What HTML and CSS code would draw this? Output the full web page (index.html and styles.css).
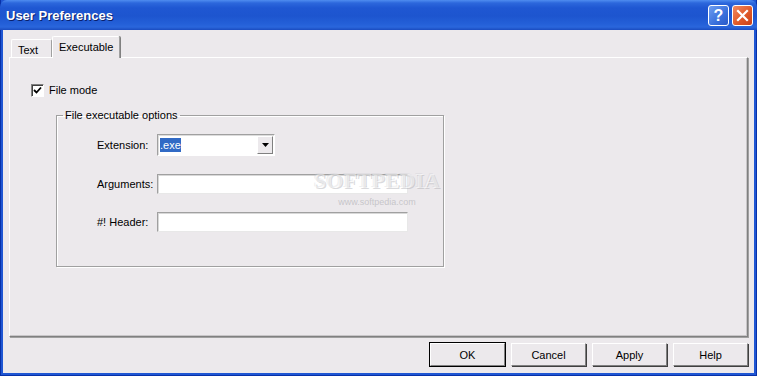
FILE: index.html
```html
<!DOCTYPE html>
<html lang="en">
<head>
    <meta charset="UTF-8">
    <title>User Preferences</title>
    <link rel="stylesheet" href="styles.css">
</head>
<body>
    <div class="window">
        <div class="titlebar">
            <span class="title">User Preferences</span>
            <div class="title-buttons">
                <span class="tbtn help">?</span>
                <span class="tbtn close">
                    <svg width="13" height="13" viewBox="0 0 13 13">
                        <path d="M2 2 L11 11 M11 2 L2 11" stroke="#fff" stroke-width="2.2" stroke-linecap="square"/>
                    </svg>
                </span>
            </div>
        </div>

        <div class="client">
            <div class="tabs">
                <div class="tab">Text</div>
                <div class="tab active">Executable</div>
            </div>

            <div class="panel">
                <label class="check-row">
                    <span class="checkbox">
                        <svg width="9" height="9" viewBox="0 0 9 9">
                            <path d="M1 4 L3.5 6.5 L8 1.5" fill="none" stroke="#000" stroke-width="1.8"/>
                        </svg>
                    </span>
                    File mode
                </label>

                <fieldset class="group">
                    <legend>File executable options</legend>
                    <div class="form-grid">
                        <span class="lbl">Extension:</span>
                        <div class="combo">
                            <span class="combo-value"><span class="sel">.exe</span></span>
                            <span class="combo-btn">
                                <svg width="7" height="4" viewBox="0 0 7 4"><path d="M0 0 H7 L3.5 4 Z" fill="#000"/></svg>
                            </span>
                        </div>

                        <span class="lbl">Arguments:</span>
                        <div class="field"></div>

                        <span class="lbl">#! Header:</span>
                        <div class="field"></div>
                    </div>
                </fieldset>

                <div class="watermark">
                    <span class="wm-big">SOFTPEDIA</span>
                    <span class="wm-small">www.softpedia.com</span>
                </div>
            </div>

            <div class="actions">
                <button class="btn default">OK</button>
                <button class="btn">Cancel</button>
                <button class="btn">Apply</button>
                <button class="btn">Help</button>
            </div>
        </div>
    </div>
</body>
</html>
```

FILE: styles.css
```css
body {
    margin: 0;
    font-family: "Liberation Sans", Arial, sans-serif;
    font-size: 11px;
    color: #000;
}

.window {
    width: 757px;
    height: 376px;
    box-sizing: border-box;
    display: flex;
    flex-direction: column;
    background: #1f56d3;
    border-left: 1px solid #0831a8;
    border-right: 1px solid #0831a8;
    border-bottom: 1px solid #0831a8;
}

.titlebar {
    height: 30px;
    flex-shrink: 0;
    display: flex;
    align-items: center;
    justify-content: space-between;
    padding: 0 4px 0 6px;
    margin: 0 -1px;
    background: linear-gradient(to bottom,
        #4f8df0 0,
        #2c67dc 3px,
        #1f57d2 8px,
        #1d55cf 16px,
        #2460d8 24px,
        #2a66dc 27px,
        #1a4cc0 30px);
    border-radius: 7px 7px 0 0;
}

.title {
    color: #fff;
    font-weight: bold;
    font-size: 13px;
    text-shadow: 1px 1px 0 #0a1f6a;
}

.title-buttons {
    display: flex;
    gap: 3px;
    padding-top: 1px;
}

.tbtn {
    width: 19px;
    height: 19px;
    border: 1px solid #fff;
    border-radius: 3px;
    display: flex;
    align-items: center;
    justify-content: center;
    color: #fff;
}

.help {
    background: linear-gradient(to bottom right, #6e9ef0, #3a70dc 60%, #2a5ac8);
    font-weight: bold;
    font-size: 16px;
}

.close {
    background: linear-gradient(to bottom right, #f08a62, #e05a2a 55%, #c8401a);
}

.client {
    flex: 1;
    margin: 0 2px 2px;
    background: #ece9ec;
    padding: 5px 6px 0;
    display: flex;
    flex-direction: column;
}

.tabs {
    display: flex;
    align-items: flex-end;
    height: 22px;
    padding-left: 2px;
}

.tab {
    height: 18px;
    box-sizing: border-box;
    padding: 4px 6px 0 6px;
    border: 1px solid #fff;
    border-bottom: none;
    border-right: 1px solid #a0a0a0;
    border-radius: 2px 2px 0 0;
    width: 41px;
}

.tab.active {
    height: 22px;
    width: 68px;
    padding: 4px 6px 0 6px;
    margin-bottom: -1px;
    background: #ece9ec;
    position: relative;
    z-index: 1;
    box-shadow: 1px 0 0 #808080;
}

.panel {
    position: relative;
    height: 280px;
    box-sizing: border-box;
    border: 1px solid;
    border-color: #fff #808080 #808080 #fff;
    box-shadow: 1px 1px 0 #a0a0a0, inset -1px -1px 0 #c8c6c8;
    padding: 25px 0 0 21px;
}

.check-row {
    display: flex;
    align-items: center;
    gap: 5px;
    height: 14px;
}

.checkbox {
    width: 13px;
    height: 13px;
    box-sizing: border-box;
    background: #fff;
    border: 1px solid;
    border-color: #808080 #fff #fff #808080;
    box-shadow: inset 1px 1px 0 #404040;
    display: flex;
    align-items: center;
    justify-content: center;
}

.group {
    margin: 12px 0 0 25px;
    width: 388px;
    height: 158px;
    box-sizing: border-box;
    padding: 13px 0 0 0;
    border: 1px solid #a0a0a0;
    box-shadow: inset 1px 1px 0 #fff, 1px 1px 0 #fff;
}

.group legend {
    padding: 0 2px;
    margin-left: 6px;
}

.form-grid {
    display: grid;
    grid-template-columns: 60px auto;
    row-gap: 18px;
    align-items: center;
    justify-items: start;
    padding-left: 40px;
}

.lbl {
    padding-bottom: 1px;
}

.combo {
    width: 118px;
    height: 22px;
    box-sizing: border-box;
    background: #fff;
    border: 1px solid;
    border-color: #a0a0a0 #fff #fff #a0a0a0;
    box-shadow: inset 1px 1px 0 #dcdcdc;
    display: flex;
    align-items: center;
    padding: 1px 1px 1px 2px;
}

.combo-value {
    flex: 1;
}

.sel {
    background: #316ac5;
    color: #fff;
    padding: 1px 0;
}

.combo-btn {
    width: 16px;
    height: 18px;
    box-sizing: border-box;
    background: #ece9ec;
    border: 1px solid;
    border-color: #fff #808080 #808080 #fff;
    display: flex;
    align-items: center;
    justify-content: center;
}

.field {
    width: 251px;
    height: 20px;
    box-sizing: border-box;
    background: #fff;
    border: 1px solid;
    border-color: #a0a0a0 #e8e8e8 #e8e8e8 #a0a0a0;
    box-shadow: inset 1px 1px 0 #d8d8d8;
}

.group + .watermark {
    position: absolute;
    left: 300px;
    top: 111px;
    width: 134px;
    display: flex;
    flex-direction: column;
    align-items: center;
    gap: 4px;
    pointer-events: none;
}

.wm-big {
    font-family: "Liberation Serif", serif;
    font-weight: bold;
    font-size: 22px;
    line-height: 24px;
    color: rgba(255, 255, 255, 0.5);
    text-shadow: 1px 1px 0 rgba(170, 170, 175, 0.45), -1px -1px 0 rgba(200, 200, 205, 0.3);
}

.wm-small {
    font-size: 9px;
    color: rgba(160, 160, 165, 0.5);
}

.actions {
    display: flex;
    justify-content: flex-end;
    gap: 6px;
    margin-top: 6px;
}

.btn {
    width: 75px;
    height: 23px;
    font: inherit;
    font-size: 11px;
    background: #ece9ec;
    border: 1px solid;
    border-color: #fff #808080 #808080 #fff;
    box-shadow: 1px 1px 0 #404040;
    padding: 0;
}

.btn.default {
    outline: 1px solid #000;
}
```
